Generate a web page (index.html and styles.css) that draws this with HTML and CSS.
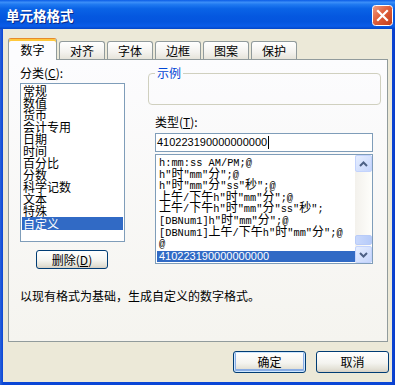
FILE: index.html
```html
<!DOCTYPE html>
<html>
<head>
<meta charset="utf-8">
<link rel="stylesheet" href="styles.css">
</head>
<body>
<div class="win">
  <div class="title">
    <span class="ttl">单元格格式</span>
    <span class="close">
      <svg width="21" height="21" viewBox="0 0 21 21">
        <defs>
          <linearGradient id="cg" x1="0" y1="0" x2="1" y2="1">
            <stop offset="0" stop-color="#F0A088"/>
            <stop offset="0.45" stop-color="#E0603C"/>
            <stop offset="1" stop-color="#C03A18"/>
          </linearGradient>
        </defs>
        <rect x="0.5" y="0.5" width="20" height="20" rx="3" fill="url(#cg)" stroke="#FFFFFF"/>
        <path d="M6 6 L15 15 M15 6 L6 15" stroke="#FFFFFF" stroke-width="2.2" stroke-linecap="square"/>
      </svg>
    </span>
  </div>
  <div class="client">
    <div class="tabs">
      <div class="tab active">数字</div>
      <div class="tab">对齐</div>
      <div class="tab">字体</div>
      <div class="tab">边框</div>
      <div class="tab">图案</div>
      <div class="tab">保护</div>
    </div>
    <div class="panel">
      <div class="top">
        <div class="left">
          <div class="lbl">分类(<u>C</u>):</div>
          <div class="catlist">
            <div class="item">常规</div>
            <div class="item">数值</div>
            <div class="item">货币</div>
            <div class="item">会计专用</div>
            <div class="item">日期</div>
            <div class="item">时间</div>
            <div class="item">百分比</div>
            <div class="item">分数</div>
            <div class="item">科学记数</div>
            <div class="item">文本</div>
            <div class="item">特殊</div>
            <div class="item sel">自定义</div>
          </div>
          <button class="btn del">删除(<u>D</u>)</button>
        </div>
        <div class="right">
          <fieldset class="group">
            <legend>示例</legend>
            <div class="sample"></div>
          </fieldset>
          <div class="lbl type-lbl">类型(<u>T</u>):</div>
          <div class="typebox">410223190000000000<span class="caret"></span></div>
          <div class="fmtlist">
            <div class="opts">
              <div class="opt">h:mm:ss AM/PM;@</div>
              <div class="opt">h"<span class="c">时</span>"mm"<span class="c">分</span>";@</div>
              <div class="opt">h"<span class="c">时</span>"mm"<span class="c">分</span>"ss"<span class="c">秒</span>";@</div>
              <div class="opt"><span class="c">上午</span>/<span class="c">下午</span>h"<span class="c">时</span>"mm"<span class="c">分</span>";@</div>
              <div class="opt"><span class="c">上午</span>/<span class="c">下午</span>h"<span class="c">时</span>"mm"<span class="c">分</span>"ss"<span class="c">秒</span>";</div>
              <div class="opt">[DBNum1]h"<span class="c">时</span>"mm"<span class="c">分</span>";@</div>
              <div class="opt">[DBNum1]<span class="c">上午</span>/<span class="c">下午</span>h"<span class="c">时</span>"mm"<span class="c">分</span>";@</div>
              <div class="opt">@</div>
              <div class="opt sel">410223190000000000</div>
            </div>
            <div class="sb">
              <div class="sbtn">
                <svg width="9" height="6" viewBox="0 0 9 6"><path d="M1 5 L4.5 1.5 L8 5" fill="none" stroke="#4D6185" stroke-width="2"/></svg>
              </div>
              <div class="track"><div class="thumb"></div></div>
              <div class="sbtn">
                <svg width="9" height="6" viewBox="0 0 9 6"><path d="M1 1 L4.5 4.5 L8 1" fill="none" stroke="#4D6185" stroke-width="2"/></svg>
              </div>
            </div>
          </div>
        </div>
      </div>
      <div class="desc">以现有格式为基础，生成自定义的数字格式。</div>
    </div>
    <div class="actions">
      <button class="btn def">确定</button>
      <button class="btn">取消</button>
    </div>
  </div>
</div>
</body>
</html>
```

FILE: styles.css
```css
html, body {
  margin: 0;
  padding: 0;
}

body {
  width: 395px;
  height: 385px;
  overflow: hidden;
  font-family: "Noto Sans CJK SC", "Liberation Sans", sans-serif;
  font-size: 12px;
  color: #000;
}

.win {
  width: 395px;
  height: 385px;
  display: flex;
  flex-direction: column;
  background: linear-gradient(90deg, #2A62DA 0, #0A46D6 3px, #0A46D6 392px, #0A3CC8 395px);
}

.title {
  height: 29px;
  flex: none;
  box-sizing: border-box;
  display: flex;
  align-items: center;
  justify-content: space-between;
  padding: 0 2px 0 6px;
  background: linear-gradient(180deg, #0A5CE6 0%, #3B8EF8 8%, #1E78F0 16%, #0A63E6 30%, #0558E0 55%, #0455DE 75%, #0A5CE8 90%, #0346C8 100%);
  color: #fff;
}

.ttl {
  font-weight: bold;
  font-size: 13.5px;
  text-shadow: 1px 1px 0 #0A2A8A;
  line-height: 16px;
}

.close {
  display: flex;
  width: 21px;
  height: 21px;
  margin-top: 2px;
}

.client {
  flex: 1;
  margin: 0 3px 3px 3px;
  background: #ECE9D8;
  padding: 9px 3px 0 5px;
  display: flex;
  flex-direction: column;
}

.tabs {
  display: flex;
  align-items: flex-end;
  gap: 2px;
  height: 21px;
  position: relative;
  z-index: 1;
}

.tab {
  width: 46px;
  height: 18px;
  box-sizing: border-box;
  border: 1px solid #919B9C;
  border-bottom: none;
  border-radius: 3px 3px 0 0;
  background: linear-gradient(#FFFFFF, #F3F2EE 60%, #E6E4DA);
  text-align: center;
  line-height: 17px;
}

.tab.active {
  width: 49px;
  height: 22px;
  margin-bottom: -1px;
  background: #FCFCFE;
  border-top: 1px solid #E68B2C;
  box-shadow: inset 0 2px 0 #FFC83C;
  line-height: 21px;
}

.panel {
  width: 380px;
  height: 283px;
  box-sizing: border-box;
  border: 1px solid #919B9C;
  background: linear-gradient(#FCFCFE, #F5F4EF);
  padding: 7px 0 0 11px;
}

.top {
  display: flex;
  gap: 23px;
}

.left {
  width: 105px;
  display: flex;
  flex-direction: column;
  align-items: flex-start;
}

.lbl {
  line-height: 12px;
  height: 12px;
  white-space: nowrap;
}

u {
  text-decoration: underline;
}

.catlist {
  margin-top: 4px;
  width: 105px;
  height: 159px;
  box-sizing: border-box;
  border: 1px solid #7F9DB9;
  background: #fff;
  padding: 1px 1px 0 1px;
}

.item {
  height: 12px;
  line-height: 12px;
  padding-left: 1px;
  white-space: nowrap;
}

.item.sel {
  height: 13px;
  line-height: 13px;
  background: #316AC5;
  color: #fff;
}

.btn {
  box-sizing: border-box;
  height: 22px;
  width: 73px;
  padding: 0;
  border: 1px solid #003C74;
  border-radius: 3px;
  background: linear-gradient(#FFFFFF, #F4F4F0 55%, #E3E1D6 85%, #D6D0C5);
  font-family: "Noto Sans CJK SC", "Liberation Sans", sans-serif;
  font-size: 12px;
  line-height: 20px;
  color: #000;
}

.del {
  margin: 8px 0 0 16px;
  width: 72px;
  height: 19px;
  line-height: 17px;
}

.right {
  width: 233px;
  display: flex;
  flex-direction: column;
}

.group {
  margin: 0;
  padding: 0 6px;
  border: 1px solid #D0D0BF;
  border-radius: 4px;
  min-width: 0;
}

.group legend {
  padding: 0 2px;
  color: #0046D5;
  line-height: 12px;
  font-size: 12px;
}

.sample {
  height: 25px;
}

.type-lbl {
  margin: 11px 0 0 7px;
}

.typebox {
  margin: 5px 0 0 7px;
  width: 218px;
  height: 19px;
  box-sizing: border-box;
  border: 1px solid #7F9DB9;
  background: #fff;
  font-family: "Liberation Sans", sans-serif;
  font-size: 11px;
  line-height: 17px;
  padding-left: 1px;
  display: flex;
  align-items: center;
}

.caret {
  display: inline-block;
  width: 1px;
  height: 13px;
  background: #000;
  margin-left: 1px;
}

.fmtlist {
  margin: 2px 0 0 7px;
  width: 218px;
  height: 110px;
  box-sizing: border-box;
  border: 1px solid #7F9DB9;
  background: #fff;
  display: flex;
}

.opts {
  flex: 1;
  min-width: 0;
  padding: 3px 0 0 1px;
  overflow: hidden;
}

.opt {
  height: 11.6px;
  line-height: 11.6px;
  white-space: nowrap;
  padding-left: 2px;
  font-family: "Liberation Mono", monospace;
  font-size: 10.33px;
}

.opt .c {
  font-family: "Noto Sans CJK SC", sans-serif;
  font-size: 12px;
  line-height: 0;
}

.opt.sel {
  background: #316AC5;
  color: #fff;
  font-family: "Liberation Sans", sans-serif;
  font-size: 11px;
}

.sb {
  width: 17px;
  flex: none;
  display: flex;
  flex-direction: column;
  background: linear-gradient(90deg, #F3F1EC, #FEFEFB);
}

.sbtn {
  height: 17px;
  flex: none;
  box-sizing: border-box;
  border: 1px solid #C3D3FD;
  border-radius: 2px;
  background: linear-gradient(135deg, #E6EEFF, #C6D6FC);
  display: flex;
  align-items: center;
  justify-content: center;
}

.track {
  flex: 1;
  display: flex;
  flex-direction: column;
  justify-content: flex-end;
}

.thumb {
  height: 10px;
  margin-bottom: 1px;
  box-sizing: border-box;
  border: 1px solid #B8CBF8;
  border-radius: 2px;
  background: linear-gradient(90deg, #C9D8FC, #B6CBF9);
}

.desc {
  margin-top: 21px;
  line-height: 12px;
  white-space: nowrap;
}

.actions {
  display: flex;
  justify-content: flex-end;
  gap: 10px;
  margin-top: 9px;
}

.def {
  box-shadow: inset 0 0 0 1px #CEE7FF, inset 0 -1px 0 2px #89ADE4;
}
```
